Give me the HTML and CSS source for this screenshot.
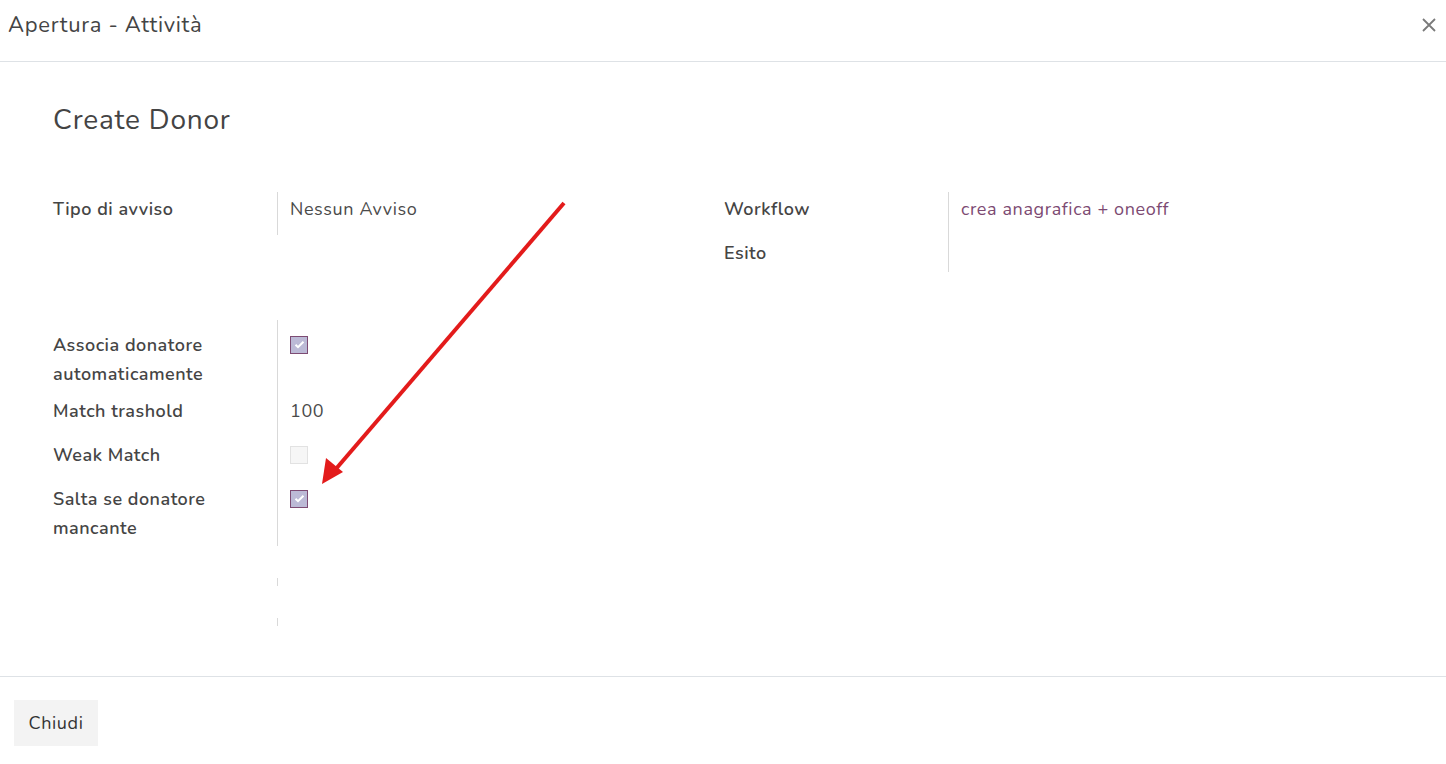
FILE: index.html
```html
<!DOCTYPE html>
<html lang="it">
<head>
<meta charset="utf-8">
<title>Apertura - Attività</title>
<link rel="stylesheet" href="styles.css">
</head>
<body>
<div class="modal">
  <header class="modal-header">
    <h4 class="modal-title">Apertura - Attività</h4>
    <button class="close" type="button" aria-label="Chiudi">
      <svg width="14" height="14" viewBox="0 0 14 14"><path d="M1 1 L13 13 M13 1 L1 13" stroke="#7a7a7a" stroke-width="1.8" fill="none"/></svg>
    </button>
  </header>
  <main class="modal-body">
    <h1 class="sheet-title">Create Donor</h1>
    <div class="groups">
      <div class="group group-a">
        <div class="row r-first">
          <div class="label">Tipo di avviso</div>
          <div class="value">Nessun Avviso</div>
        </div>
      </div>
      <div class="group group-b">
        <div class="row r-first">
          <div class="label">Workflow</div>
          <div class="value link">crea anagrafica + oneoff</div>
        </div>
        <div class="row r-esito">
          <div class="label">Esito</div>
          <div class="value"></div>
        </div>
      </div>
    </div>
    <div class="group group-c">
      <div class="row r-assoc">
        <div class="label">Associa donatore<br>automaticamente</div>
        <div class="value"><span class="cb checked"><svg width="11" height="9" viewBox="0 0 11 9"><path d="M1.5 4.8 L4 7.2 L9.5 1.8" stroke="#fff" stroke-width="2" fill="none"/></svg></span></div>
      </div>
      <div class="row r-match">
        <div class="label">Match trashold</div>
        <div class="value">100</div>
      </div>
      <div class="row r-weak">
        <div class="label">Weak Match</div>
        <div class="value"><span class="cb"></span></div>
      </div>
      <div class="row r-salta">
        <div class="label">Salta se donatore<br>mancante</div>
        <div class="value"><span class="cb checked"><svg width="11" height="9" viewBox="0 0 11 9"><path d="M1.5 4.8 L4 7.2 L9.5 1.8" stroke="#fff" stroke-width="2" fill="none"/></svg></span></div>
      </div>
    </div>
    <div class="stub s1"><div class="label"></div><div class="value"></div></div>
    <div class="stub s2"><div class="label"></div><div class="value"></div></div>
  </main>
  <footer class="modal-footer">
    <button class="btn" type="button">Chiudi</button>
  </footer>
  <svg class="arrow" width="1446" height="764" viewBox="0 0 1446 764">
    <line x1="564" y1="203" x2="335" y2="470" stroke="#e31b1b" stroke-width="4"/>
    <polygon points="322,484 326,458 343,472" fill="#e31b1b"/>
  </svg>
</div>
</body>
</html>
```

FILE: styles.css
```css
* { box-sizing: border-box; }
html, body { margin: 0; padding: 0; background: #fff; }
body {
  font-family: "Nunito", "Open Sans", "Noto Sans", sans-serif;
  color: #4a4a4a;
  width: 1446px;
  height: 764px;
  overflow: hidden;
}
.modal { position: relative; width: 1446px; height: 764px; }
.modal-header {
  height: 62px;
  border-bottom: 1px solid #dee2e6;
  display: flex;
  align-items: center;
  justify-content: space-between;
  padding: 0 9px 12px 8px;
}
.modal-title {
  margin: 0;
  font-size: 22px;
  font-weight: 400;
  color: #444;
  letter-spacing: 0.7px;
}
.close {
  border: 0;
  background: none;
  padding: 0;
  width: 16px;
  height: 16px;
  display: flex;
  align-items: center;
  justify-content: center;
}
.modal-body {
  height: 615px;
  border-bottom: 1px solid #dee2e6;
  padding: 0 53px;
}
.sheet-title {
  margin: 0;
  padding-top: 38px;
  height: 130px;
  font-size: 28px;
  font-weight: 400;
  color: #444;
  line-height: 40px;
  letter-spacing: 0.8px;
}
.groups { display: flex; }
.group-a { width: 671px; }
.group-b { width: 600px; }
.row { display: flex; font-size: 18px; line-height: 29px; letter-spacing: 0.5px; }
.label {
  width: 224px;
  flex: none;
  font-weight: 600;
  color: #454545;
}
.value {
  border-left: 1px solid #d9d9d9;
  padding-left: 12px;
  flex: 1;
  color: #4a4a4a;
  letter-spacing: 0.6px;
}
.link { color: #7c4a72; }
.r-first .label, .r-first .value { padding-top: 3px; padding-bottom: 11px; }
.r-esito .label, .r-esito .value { padding-top: 4px; padding-bottom: 4px; }
.group-c { margin-top: 48px; width: 671px; }
.r-assoc .label, .r-assoc .value { padding-top: 11px; padding-bottom: 4px; }
.r-match .label, .r-match .value { padding-top: 4px; padding-bottom: 7px; }
.r-weak .label, .r-weak .value { padding-top: 8px; padding-bottom: 7px; }
.r-salta .label, .r-salta .value { padding-top: 8px; padding-bottom: 3px; }
.cb {
  display: inline-flex;
  align-items: center;
  justify-content: center;
  width: 18px;
  height: 18px;
  border: 1px solid #e2e2e2;
  background: #f6f6f6;
  vertical-align: middle;
  margin-top: -4px;
}
.cb.checked {
  border-color: #7d4b73;
  background: #bcbad6;
}
.stub { display: flex; height: 8px; }
.stub .label { height: 8px; }
.stub .value { height: 8px; }
.s1 { margin-top: 32px; }
.s2 { margin-top: 32px; }
.modal-footer { padding: 23px 14px; }
.btn {
  font-family: inherit;
  font-size: 18px;
  letter-spacing: 0.6px;
  color: #333;
  background: #f3f3f3;
  border: 0;
  border-radius: 0;
  height: 46px;
  width: 84px;
  padding: 0;
}
.arrow { position: absolute; left: 0; top: 0; pointer-events: none; }
```
